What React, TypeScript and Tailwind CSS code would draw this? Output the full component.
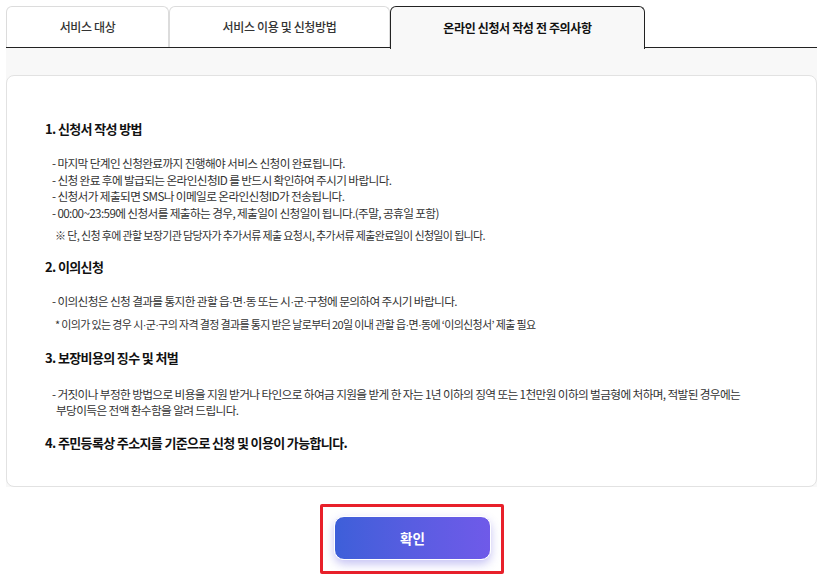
import { useState } from 'react'

const tabs = ['서비스 대상', '서비스 이용 및 신청방법', '온라인 신청서 작성 전 주의사항']
const tabWidths = ['w-[163px]', 'w-[221px]', 'w-[255px]']

// 가운뎃점은 좁은 라틴 글꼴로
function Dot() {
  return <span style={{ fontFamily: '"Liberation Sans", sans-serif' }}>·</span>
}

export default function App() {
  const [active, setActive] = useState(2)

  return (
    <div
      className="w-[824px] h-[582px] bg-white text-[#222] overflow-hidden"
      style={{ fontFamily: '"Noto Sans CJK KR", "Noto Sans", sans-serif' }}
    >
      <div className="pl-[6px] pr-[7px] pt-[6px]">
        {/* 탭 */}
        <div className="flex h-[42px] border-b border-[#222]">
          {tabs.map((t, i) => {
            const on = i === active
            return (
              <button
                key={t}
                type="button"
                onClick={() => setActive(i)}
                className={`${tabWidths[i]} flex items-center justify-center rounded-t-[6px] tracking-[-0.03em] ${
                  on
                    ? 'bg-[#f8f8f8] border border-b-0 border-[#222] -mb-px h-[43px] text-[12px] font-bold text-[#111]'
                    : 'bg-white border border-b-0 border-[#dcdcdc] text-[12px] font-medium text-[#333]'
                }`}
              >
                {t}
              </button>
            )
          })}
        </div>

        {/* 본문 */}
        <div className="bg-[#f8f8f8] pt-[27px]">
          <div className="bg-white border border-[#e2e2e2] rounded-[8px] h-[412px] pl-[38px] pr-6 pt-[44px] tracking-[-0.04em]">
            <h3 className="text-[13px] font-bold text-[#111] leading-[18px]">1. 신청서 작성 방법</h3>
            <ul className="mt-[17px] pl-[7px] text-[11.7px] leading-[16.7px] text-[#333]">
              <li>- 마지막 단계인 신청완료까지 진행해야 서비스 신청이 완료됩니다.</li>
              <li>- 신청 완료 후에 발급되는 온라인신청ID 를 반드시 확인하여 주시기 바랍니다.</li>
              <li>- 신청서가 제출되면 SMS나 이메일로 온라인신청ID가 전송됩니다.</li>
              <li>- 00:00~23:59에 신청서를 제출하는 경우, 제출일이 신청일이 됩니다.(주말, 공휴일 포함)</li>
            </ul>
            <p className="mt-[5px] pl-[10px] text-[11px] leading-[16px] text-[#333]">
              ※ 단, 신청 후에 관할 보장기관 담당자가 추가서류 제출 요청시, 추가서류 제출완료일이 신청일이 됩니다.
            </p>

            <h3 className="mt-[15px] text-[13px] font-bold text-[#111] leading-[18px]">2. 이의신청</h3>
            <ul className="mt-[17px] pl-[7px] text-[11.7px] leading-[16.7px] text-[#333]">
              <li>
                - 이의신청은 신청 결과를 통지한 관할 읍<Dot />면<Dot />동 또는 시<Dot />군<Dot />구청에 문의하여 주시기 바랍니다.
              </li>
            </ul>
            <p className="mt-[5px] pl-[10px] text-[11px] leading-[16px] text-[#333]">
              * 이의가 있는 경우 시<Dot />군<Dot />구의 자격 결정 결과를 통지 받은 날로부터 20일 이내 관할 읍<Dot />면<Dot />동에 ‘이의신청서’ 제출 필요
            </p>

            <h3 className="mt-[16px] text-[13px] font-bold text-[#111] leading-[18px]">3. 보장비용의 징수 및 처벌</h3>
            <div className="mt-[19px] pl-[7px] text-[11.7px] leading-[16.7px] text-[#333]">
              <p>- 거짓이나 부정한 방법으로 비용을 지원 받거나 타인으로 하여금 지원을 받게 한 자는 1년 이하의 징역 또는 1천만원 이하의 벌금형에 처하며, 적발된 경우에는</p>
              <p className="pl-[4px]">부당이득은 전액 환수함을 알려 드립니다.</p>
            </div>

            <h3 className="mt-[15px] text-[13px] font-bold text-[#111] leading-[18px]">4. 주민등록상 주소지를 기준으로 신청 및 이용이 가능합니다.</h3>
          </div>
        </div>
      </div>

      {/* 확인 버튼 */}
      <div className="flex justify-center pt-[17px]">
        <div className="border-[3px] border-[#e8202a] rounded-[2px] pt-[9px] pb-[11px] pl-[11px] pr-[10px]">
          <button
            type="button"
            className="w-[157px] h-[44px] rounded-[10px] border border-white bg-gradient-to-r from-[#3d5fd9] to-[#6f5ae9] text-white text-[13.5px] font-bold shadow-[0_4px_10px_rgba(90,80,220,0.35)]"
          >
            확인
          </button>
        </div>
      </div>
    </div>
  )
}
